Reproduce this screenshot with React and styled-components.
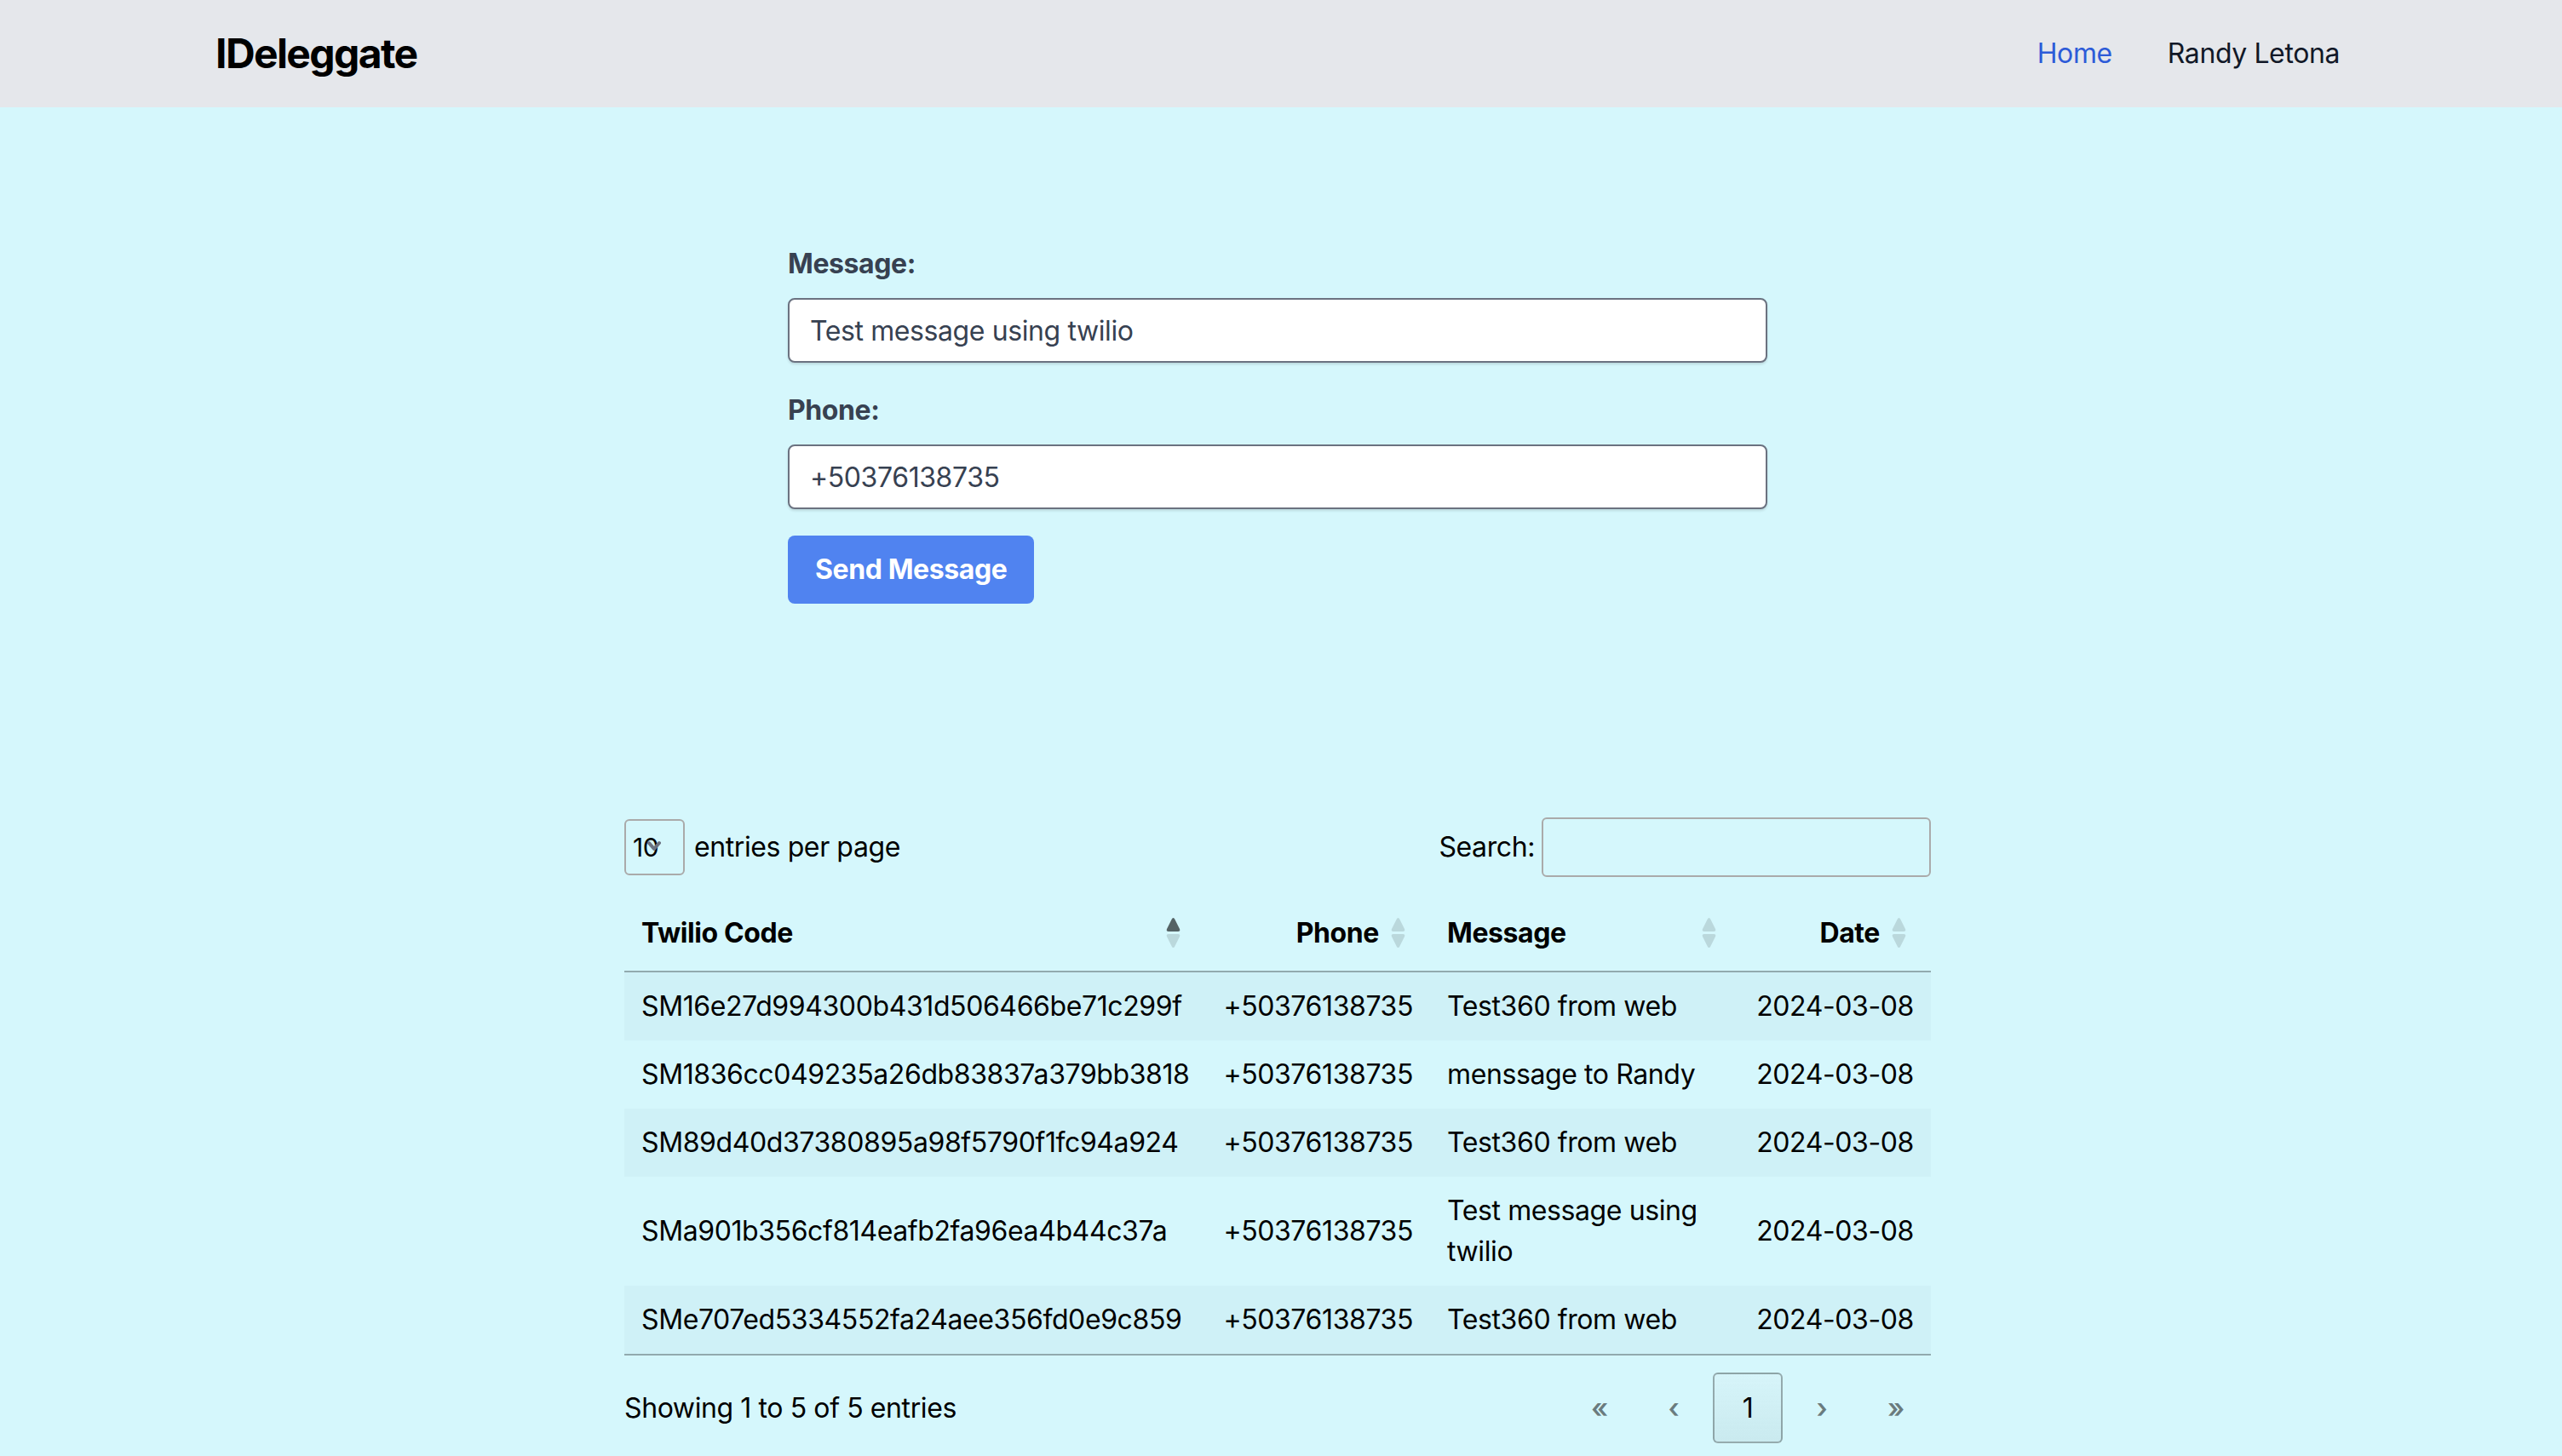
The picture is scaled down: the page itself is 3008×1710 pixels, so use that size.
import React from 'react';
import styled, { createGlobalStyle } from 'styled-components';

const GlobalStyle = createGlobalStyle`
    html, body {
        margin: 0;
        padding: 0;
    }
    body {
        background: #d5f7fc;
        font-family: Inter, "Noto Sans", "Liberation Sans", sans-serif;
        letter-spacing: -0.4px;
        color: #000;
    }
    * {
        box-sizing: border-box;
    }
`;

const Header = styled.header`
    height: 126px;
    background-color: #e5e7eb;
    display: flex;
    justify-content: space-between;
    align-items: center;
    padding: 0 261px 0 253px;
`;

const Logo = styled.div`
    font-size: 48px;
    line-height: 64px;
    font-weight: 700;
    letter-spacing: -1.6px;
    color: #000;
`;

const Nav = styled.nav`
    display: flex;
    gap: 65px;
`;

const NavLink = styled.a`
    font-size: 32px;
    line-height: 48px;
    text-decoration: none;
    color: ${props => (props.active ? "#2d5bd8" : "#111827")};
`;

const Main = styled.main`
    width: 3000px;
    padding-top: 160px;
`;

const Form = styled.form`
    width: 1150px;
    margin: 0 auto;
`;

const Field = styled.div`
    margin-bottom: 32px;
`;

const Label = styled.label`
    display: block;
    font-size: 32px;
    line-height: 48px;
    font-weight: 700;
    color: #374151;
    margin-bottom: 16px;
`;

const Input = styled.input`
    display: block;
    width: 100%;
    height: 76px;
    padding: 0 24px;
    border: 2px solid #6b7280;
    border-radius: 8px;
    background: #fff;
    font-family: inherit;
    font-size: 32px;
    letter-spacing: inherit;
    color: #374151;
    box-shadow: 0 2px 3px rgba(0, 0, 0, 0.12);
    outline: none;
`;

const SendButton = styled.button`
    display: block;
    margin-top: -1px;
    padding: 16px 32px;
    border: none;
    border-radius: 8px;
    background-color: #5083f0;
    color: #fff;
    font-family: inherit;
    font-size: 32px;
    letter-spacing: inherit;
    line-height: 48px;
    font-weight: 700;
`;

const TableSection = styled.section`
    width: 1534px;
    margin: 251px auto 0;
    font-size: 32px;
    line-height: 48px;
`;

const Controls = styled.div`
    display: flex;
    justify-content: space-between;
    align-items: center;
    height: 70px;
`;

const Length = styled.div`
    display: flex;
    align-items: center;
    gap: 11px;
`;

const SelectBox = styled.div`
    position: relative;
    width: 71px;
    height: 66px;
    border: 2px solid #aaa;
    border-radius: 6px;
    padding-left: 8px;
    font-size: 30px;
    line-height: 62px;
`;

const Chevron = styled.svg`
    position: absolute;
    left: 25px;
    top: 23px;
`;

const SearchBox = styled.label`
    display: flex;
    align-items: center;
    gap: 8px;
`;

const SearchInput = styled.input`
    width: 457px;
    height: 70px;
    border: 2px solid #aaa;
    border-radius: 6px;
    background: transparent;
    outline: none;
`;

const Table = styled.table`
    width: 100%;
    margin-top: 22px;
    border-collapse: collapse;
    table-layout: fixed;
`;

const Th = styled.th`
    position: relative;
    padding: 20px ${props => (props.right ? "60px" : "20px")} 20px 20px;
    text-align: ${props => (props.right ? "right" : "left")};
    font-weight: 700;
    border-bottom: 2px solid rgba(0, 0, 0, 0.3);
    white-space: nowrap;
`;

const SortIcon = styled.svg`
    position: absolute;
    right: ${props => props.offset}px;
    top: 26px;
`;

const Row = styled.tr`
    background: ${props => (props.odd ? "#cff1f7" : "transparent")};
    &:last-child td {
        border-bottom: 2px solid rgba(0, 0, 0, 0.3);
    }
`;

const Td = styled.td`
    padding: 16px 20px;
    text-align: ${props => (props.right ? "right" : "left")};
    vertical-align: middle;
    white-space: ${props => (props.wrap ? "normal" : "nowrap")};
`;

const Footer = styled.div`
    display: flex;
    justify-content: space-between;
    align-items: center;
    margin-top: 20px;
`;

const Paging = styled.div`
    display: flex;
    gap: 5px;
`;

const PageButton = styled.span`
    width: 82px;
    height: 83px;
    display: flex;
    align-items: center;
    justify-content: center;
    border-radius: 6px;
    border: 2px solid ${props => (props.current ? "rgba(0, 0, 0, 0.3)" : "transparent")};
    background: ${props => (props.current ? "linear-gradient(to bottom, rgba(230,230,230,0.1) 0%, rgba(0,0,0,0.05) 100%)" : "transparent")};
    color: ${props => (props.current ? "#000" : "rgba(0, 0, 0, 0.5)")};
    font-weight: ${props => (props.current ? 400 : 600)};
`;

const rows = [
    ["SM16e27d994300b431d506466be71c299f", "+50376138735", "Test360 from web", "2024-03-08"],
    ["SM1836cc049235a26db83837a379bb3818", "+50376138735", "menssage to Randy", "2024-03-08"],
    ["SM89d40d37380895a98f5790f1fc94a924", "+50376138735", "Test360 from web", "2024-03-08"],
    ["SMa901b356cf814eafb2fa96ea4b44c37a", "+50376138735", "Test message using twilio", "2024-03-08"],
    ["SMe707ed5334552fa24aee356fd0e9c859", "+50376138735", "Test360 from web", "2024-03-08"],
];

const Sort = ({ active, offset }) => (
    <SortIcon offset={offset} width="17" height="35" viewBox="0 0 17 35">
        <path d="M8.5 0 C9.5 0 10 1 10.5 2 L16 13 C16.8 15 16 16 14 16 L3 16 C1 16 0.2 15 1 13 L6.5 2 C7 1 7.5 0 8.5 0 Z"
            fill={active ? "rgba(0,0,0,0.6)" : "rgba(0,0,0,0.125)"} />
        <path d="M8.5 35 C9.5 35 10 34 10.5 33 L16 22 C16.8 20 16 19 14 19 L3 19 C1 19 0.2 20 1 22 L6.5 33 C7 34 7.5 35 8.5 35 Z"
            fill="rgba(0,0,0,0.125)" />
    </SortIcon>
);

export default function App() {
    return (
        <>
            <GlobalStyle />
            <Header>
                <Logo>IDeleggate</Logo>
                <Nav>
                    <NavLink active href="#">Home</NavLink>
                    <NavLink href="#">Randy Letona</NavLink>
                </Nav>
            </Header>
            <Main>
                <Form onSubmit={e => e.preventDefault()}>
                    <Field>
                        <Label>Message:</Label>
                        <Input defaultValue="Test message using twilio" />
                    </Field>
                    <Field>
                        <Label>Phone:</Label>
                        <Input defaultValue="+50376138735" />
                    </Field>
                    <SendButton type="submit">Send Message</SendButton>
                </Form>

                <TableSection>
                    <Controls>
                        <Length>
                            <SelectBox>
                                10
                                <Chevron width="16" height="13" viewBox="0 0 16 13">
                                    <path d="M2 3 L8 10 L14 3" fill="none" stroke="#6b7280" strokeWidth="4" strokeLinecap="round" strokeLinejoin="round" />
                                </Chevron>
                            </SelectBox>
                            <span>entries per page</span>
                        </Length>
                        <SearchBox>
                            Search:
                            <SearchInput />
                        </SearchBox>
                    </Controls>

                    <Table>
                        <colgroup>
                            <col style={{ width: 683 }} />
                            <col style={{ width: 263 }} />
                            <col style={{ width: 360 }} />
                            <col style={{ width: 228 }} />
                        </colgroup>
                        <thead>
                            <tr>
                                <Th>Twilio Code<Sort active offset={30} /></Th>
                                <Th right>Phone<Sort offset={29} /></Th>
                                <Th>Message<Sort offset={24} /></Th>
                                <Th right>Date<Sort offset={29} /></Th>
                            </tr>
                        </thead>
                        <tbody>
                            {rows.map((r, i) => (
                                <Row key={r[0]} odd={i % 2 === 0}>
                                    <Td>{r[0]}</Td>
                                    <Td right>{r[1]}</Td>
                                    <Td wrap>{r[2]}</Td>
                                    <Td right>{r[3]}</Td>
                                </Row>
                            ))}
                        </tbody>
                    </Table>

                    <Footer>
                        <span>Showing 1 to 5 of 5 entries</span>
                        <Paging>
                            <PageButton>«</PageButton>
                            <PageButton>‹</PageButton>
                            <PageButton current>1</PageButton>
                            <PageButton>›</PageButton>
                            <PageButton>»</PageButton>
                        </Paging>
                    </Footer>
                </TableSection>
            </Main>
        </>
    );
}
